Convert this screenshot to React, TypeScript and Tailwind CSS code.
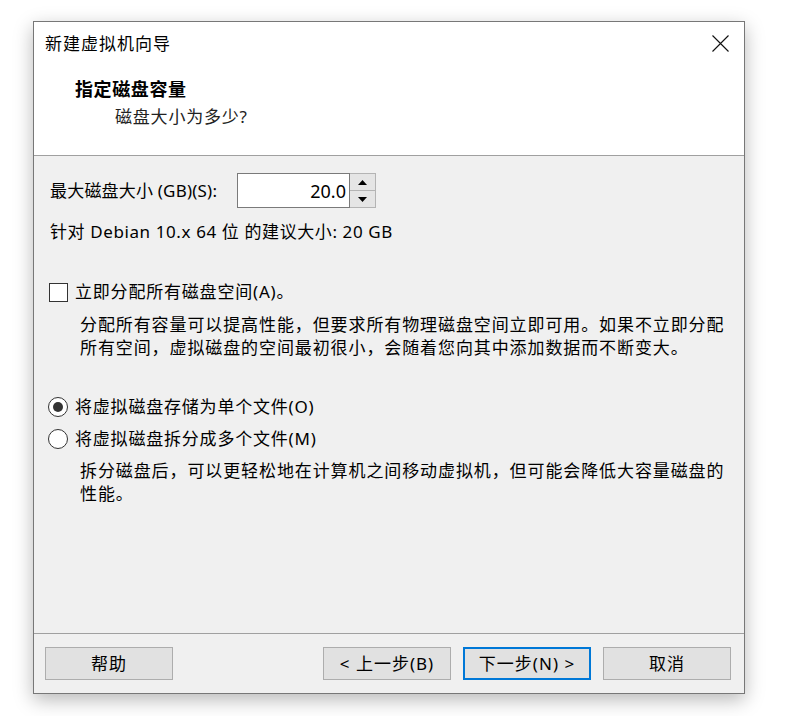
import React from "react";

const font = { fontFamily: '"Noto Sans", "Noto Sans CJK SC", sans-serif' };

function Btn({ children, primary }: { children: React.ReactNode; primary?: boolean }) {
  return (
    <div
      className={
        "w-[128px] h-[33px] flex items-center justify-center bg-[#e1e1e1] text-[17px] leading-[20px] text-black tracking-[1px] " +
        (primary ? "border-2 border-[#0078d7]" : "border border-[#adadad]")
      }
    >
      {children}
    </div>
  );
}

export default function App() {
  return (
    <div className="w-[795px] h-[716px] bg-white pl-[33px] pt-[21px]" style={font}>
      <div className="w-[712px] h-[673px] border border-[#777777] bg-[#f0f0f0] flex flex-col shadow-[0_6px_18px_rgba(0,0,0,0.28)]">
        {/* header */}
        <div className="h-[133px] bg-white flex flex-col">
          <div className="h-[43px] flex items-center justify-between pl-[11px] pr-[15px]">
            <span className="text-[17px] leading-[24px] tracking-[1px] text-black">新建虚拟机向导</span>
            <svg width="17" height="17" viewBox="0 0 17 17">
              <path d="M0.5 0.5 L16.5 16.5 M16.5 0.5 L0.5 16.5" stroke="#111" strokeWidth="1.1" fill="none" />
            </svg>
          </div>
          <div className="mt-[12px] pl-[41px] text-[18px] leading-[24px] font-bold tracking-[0.6px] text-black">
            指定磁盘容量
          </div>
          <div className="mt-[4px] pl-[81px] text-[17px] leading-[24px] tracking-[0.8px] text-[#222]">
            磁盘大小为多少?
          </div>
        </div>
        <div className="h-px bg-[#a0a0a0]" />
        {/* body */}
        <div className="h-[477px] flex flex-col text-black">
          <div className="mt-[17px] pl-[16px] flex items-center">
            <span className="w-[187px] text-[17px] leading-[24px] tracking-[0.2px]">最大磁盘大小 (GB)(S):</span>
            <div className="h-[35px] w-[113px] bg-white border border-[#7a7a7a] flex items-center justify-end pr-[3px] text-[18px] leading-[24px]">
              20.0
            </div>
            <div className="h-[35px] w-[26px] border border-[#b4b4b4] border-l-0 flex flex-col">
              <div className="flex-1 bg-[#e5e5e5] border-b border-[#b4b4b4] flex items-center justify-center">
                <svg width="9" height="5" viewBox="0 0 9 5"><path d="M0 5 L4.5 0 L9 5 Z" fill="#000" /></svg>
              </div>
              <div className="flex-1 bg-[#e5e5e5] flex items-center justify-center">
                <svg width="9" height="5" viewBox="0 0 9 5"><path d="M0 0 L4.5 5 L9 0 Z" fill="#000" /></svg>
              </div>
            </div>
          </div>
          <div className="mt-[12px] pl-[16px] text-[17px] leading-[24px] tracking-[0.6px]">
            针对 Debian 10.x 64 位 的建议大小: 20 GB
          </div>
          <div className="mt-[38px] pl-[15px] flex items-center h-[20px]">
            <div className="w-[19px] h-[19px] border border-[#333] bg-white" />
            <span className="ml-[7px] text-[17px] leading-[24px] tracking-[0.8px]">立即分配所有磁盘空间(A)。</span>
          </div>
          <div className="mt-[11px] pl-[46px] text-[17px] leading-[23px] tracking-[0.9px] whitespace-nowrap">
            <div>分配所有容量可以提高性能，但要求所有物理磁盘空间立即可用。如果不立即分配</div>
            <div>所有空间，虚拟磁盘的空间最初很小，会随着您向其中添加数据而不断变大。</div>
          </div>
          <div className="mt-[38px] pl-[14px] flex items-center h-[20px]">
            <div className="w-[20px] h-[20px] rounded-full border border-[#333] bg-white flex items-center justify-center">
              <div className="w-[10px] h-[10px] rounded-full bg-[#333]" />
            </div>
            <span className="ml-[7px] text-[17px] leading-[24px] tracking-[0.8px]">将虚拟磁盘存储为单个文件(O)</span>
          </div>
          <div className="mt-[12px] pl-[14px] flex items-center h-[20px]">
            <div className="w-[20px] h-[20px] rounded-full border border-[#333] bg-white" />
            <span className="ml-[7px] text-[17px] leading-[24px] tracking-[0.8px]">将虚拟磁盘拆分成多个文件(M)</span>
          </div>
          <div className="mt-[10px] pl-[46px] text-[17px] leading-[23px] tracking-[0.9px] whitespace-nowrap">
            <div>拆分磁盘后，可以更轻松地在计算机之间移动虚拟机，但可能会降低大容量磁盘的</div>
            <div>性能。</div>
          </div>
        </div>
        <div className="h-px bg-[#a0a0a0]" />
        {/* footer */}
        <div className="flex-1 flex items-start pt-[13px] pl-[11px] pr-[13px]">
          <Btn>帮助</Btn>
          <div className="flex-1" />
          <div className="flex gap-[12px]">
            <Btn>&lt; 上一步(B)</Btn>
            <Btn primary>下一步(N) &gt;</Btn>
            <Btn>取消</Btn>
          </div>
        </div>
      </div>
    </div>
  );
}
